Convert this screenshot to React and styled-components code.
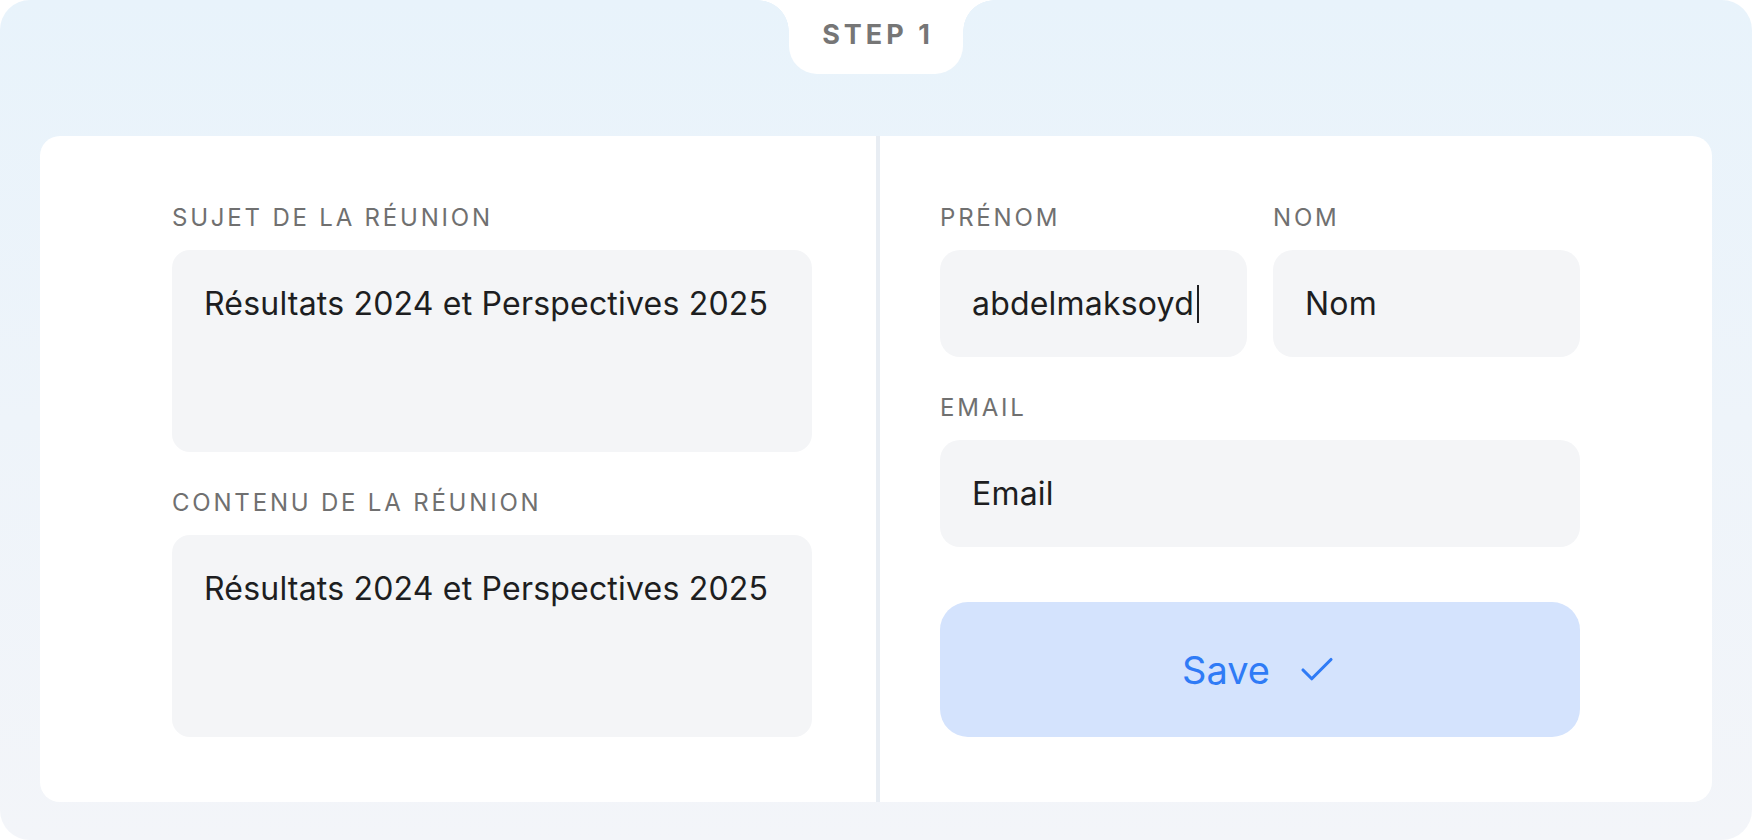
import styled, { createGlobalStyle } from 'styled-components';
import { Check } from 'lucide-react';

const GlobalStyle = createGlobalStyle`
  * { box-sizing: border-box; }
  html, body { margin: 0; padding: 0; background: #ffffff; }
  body { font-family: 'Inter', 'Noto Sans', sans-serif; }
`;

export default function App() {
  return (
    <>
      <GlobalStyle />
      <Frame>
        <StepTab>STEP 1</StepTab>
        <Card>
          <Column side="left">
            <Field>
              <Label>SUJET DE LA RÉUNION</Label>
              <TextBox>Résultats 2024 et Perspectives 2025</TextBox>
            </Field>
            <Field>
              <Label>CONTENU DE LA RÉUNION</Label>
              <TextBox>Résultats 2024 et Perspectives 2025</TextBox>
            </Field>
          </Column>
          <Divider />
          <Column side="right">
            <NameRow>
              <Field>
                <Label>PRÉNOM</Label>
                <InputBox>
                  abdelmaksoyd
                  <Caret />
                </InputBox>
              </Field>
              <Field>
                <Label>NOM</Label>
                <InputBox>Nom</InputBox>
              </Field>
            </NameRow>
            <Field>
              <Label>EMAIL</Label>
              <InputBox>Email</InputBox>
            </Field>
            <SaveButton>
              Save
              <Check size={42} strokeWidth={1.8} />
            </SaveButton>
          </Column>
        </Card>
      </Frame>
    </>
  );
}

const Frame = styled.div`
  position: relative;
  width: 100%;
  height: 100vh;
  padding: 136px 40px 38px;
  border-radius: 30px;
  background: linear-gradient(180deg, #e8f3fb 0%, #eef4fa 50%, #f3f5f9 100%);
`;

const StepTab = styled.div`
  position: absolute;
  top: 0;
  left: 50%;
  transform: translateX(-50%);
  width: 174px;
  height: 74px;
  background: #ffffff;
  border-radius: 0 0 28px 28px;
  display: flex;
  align-items: center;
  justify-content: center;
  padding: 0 0 6px 4px;
  font-size: 27px;
  font-weight: 700;
  letter-spacing: 4px;
  color: #767676;

  &::before,
  &::after {
    content: '';
    position: absolute;
    top: 0;
    width: 31px;
    height: 31px;
  }
  &::before {
    left: -31px;
    background: radial-gradient(circle at 0 100%, transparent 30.5px, #ffffff 31px);
  }
  &::after {
    right: -31px;
    background: radial-gradient(circle at 100% 100%, transparent 30.5px, #ffffff 31px);
  }
`;

const Card = styled.div`
  display: flex;
  height: 100%;
  background: #ffffff;
  border-radius: 20px;
`;

const Column = styled.div`
  flex: 1;
  display: flex;
  flex-direction: column;
  gap: 39px;
  padding: ${p => (p.side === 'left' ? '70px 64px 65px 132px' : '70px 132px 65px 60px')};
`;

const Divider = styled.div`
  width: 4px;
  background: #e8edf3;
`;

const Field = styled.div`
  display: flex;
  flex-direction: column;
  gap: 20px;
  flex: 1;
`;

const NameRow = styled.div`
  display: flex;
  gap: 26px;
`;

const Label = styled.div`
  font-size: 24px;
  line-height: 24px;
  letter-spacing: 2.8px;
  color: #707070;
  font-weight: 400;
`;

const TextBox = styled.div`
  height: 202px;
  background: #f4f5f7;
  border-radius: 18px;
  padding: 35px 32px;
  font-size: 32px;
  line-height: 38px;
  letter-spacing: 0.2px;
  color: #1d1e21;
`;

const InputBox = styled.div`
  height: 107px;
  display: flex;
  align-items: center;
  background: #f4f5f7;
  border-radius: 20px;
  padding: 0 32px;
  font-size: 32px;
  letter-spacing: 0.2px;
  color: #1d1e21;
`;

const Caret = styled.span`
  display: inline-block;
  width: 2px;
  height: 38px;
  margin-left: 3px;
  background: #1d1e21;
`;

const SaveButton = styled.button`
  margin-top: 16px;
  height: 135px;
  border: none;
  border-radius: 28px;
  background: #d4e3fd;
  color: #2f7bf6;
  font-family: inherit;
  font-size: 38px;
  display: flex;
  align-items: center;
  justify-content: center;
  gap: 26px;
  cursor: pointer;
`;
